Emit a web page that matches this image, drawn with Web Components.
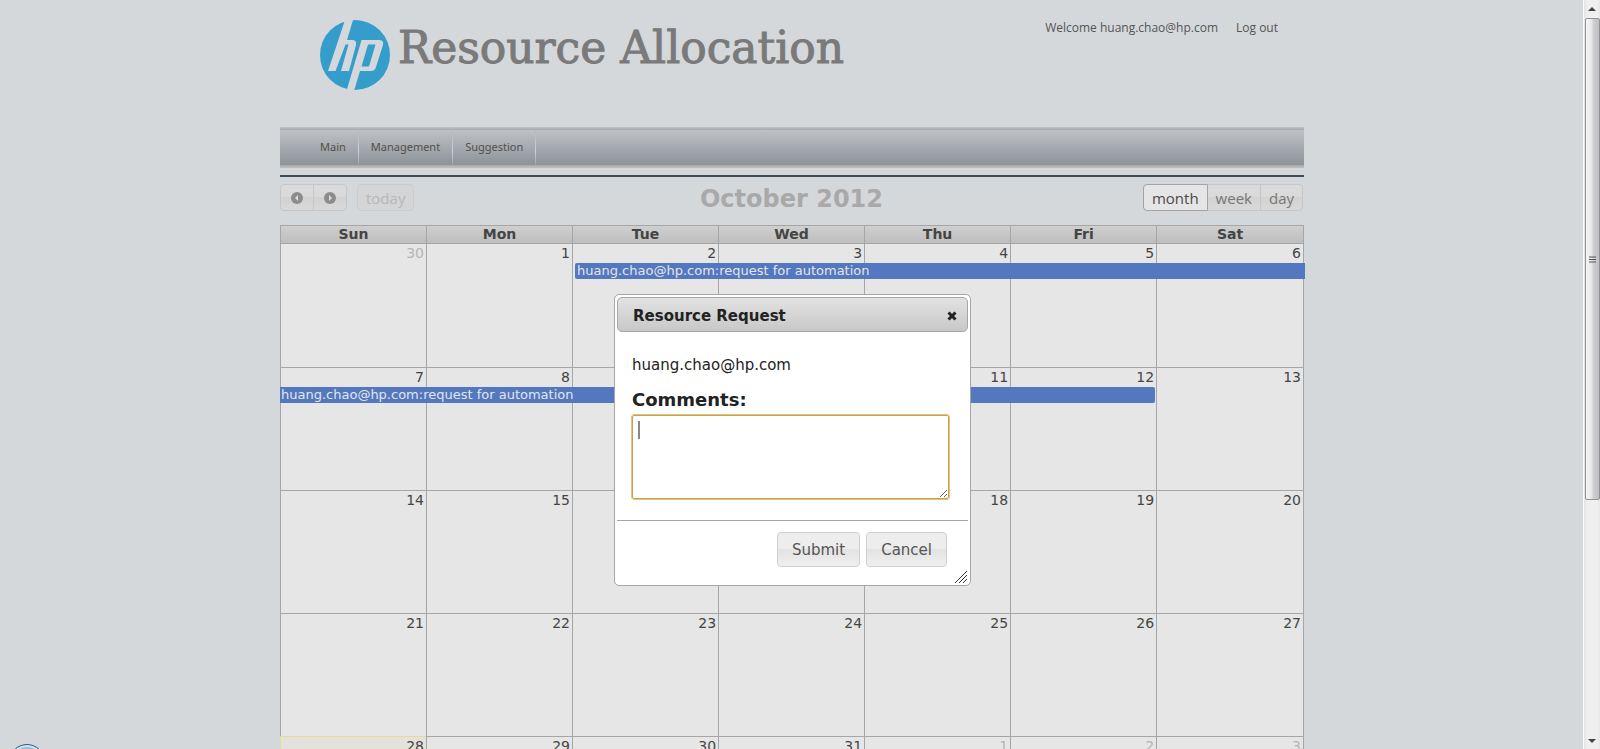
<!DOCTYPE html>
<html lang="en">
<head>
<meta charset="utf-8">
<title>Resource Allocation</title>
<style>
html, body { margin: 0; height: 100%; overflow: hidden; }
body { background: #d4d8db; color: #444; font-family: "DejaVu Sans", Verdana, sans-serif; }
</style>
</head>
<body>
<ra-app></ra-app>
<script>
const define = (name, html, setup) => customElements.define(name, class extends HTMLElement {
  connectedCallback() {
    if (this.shadowRoot) return;
    const t = document.createElement('template');
    t.innerHTML = html;
    this.attachShadow({ mode: 'open' }).append(t.content.cloneNode(true));
    if (setup) setup.call(this, this.shadowRoot);
  }
});

define('hp-logo', `
<style>:host{display:block;width:70px;height:70px} svg{display:block}</style>
<svg viewBox="0 0 70 70" width="70" height="70" role="img" aria-label="hp">
  <circle cx="35" cy="35" r="35" fill="#349dcc"/>
  <g fill="#d4d8db">
    <path d="M25 0H33L27 20H32Q37 20 36 25L29 51H21L28.500 24.500H25.500L15.500 51H8Z"/>
    <path fill-rule="evenodd" d="M41.500 20H59Q64 20 63 25L56 47Q55 51 51 51H40L34 71H26.500ZM48 24.500L41.500 46.500H49L55.500 24.500Z"/>
  </g>
</svg>`);

define('site-header', `
<style>
:host{display:block;height:127px;box-sizing:border-box;padding:20px 26px 0 40px}
header{display:flex;align-items:flex-start}
h1{margin:0 0 0 8px;font:44px/56px "DejaVu Serif",Rockwell,serif;color:#7a7a7a;-webkit-text-stroke:1px #7a7a7a;white-space:nowrap}
p{margin:0 18px 0 auto;font:12px/16px "Open Sans",sans-serif;color:#555}
a{font:12px/16px "Open Sans",sans-serif;color:#555;text-decoration:none}
</style>
<header><hp-logo></hp-logo><h1>Resource Allocation</h1><p>Welcome huang.chao@hp.com</p><a href="#">Log out</a></header>`);

define('site-nav', `
<style>
:host{display:block;border-bottom:2px solid #3f4a55;padding-bottom:7px}
nav{display:flex;box-sizing:border-box;height:41px;padding:3px 28px;
 background:linear-gradient(#bfc2c5,#a5a9ac) top/100% 3px no-repeat,linear-gradient(#a3a7aa,#bfc3c5) bottom/100% 3px no-repeat,linear-gradient(#c4c5c8,#878f95)}
a{padding:8px 12px 0 12px;height:27px;font:11px/18px "Noto Sans",sans-serif;color:#505050;text-decoration:none;border-right:1px solid;border-image:linear-gradient(#b4b7ba,#d0d2d4 60%,#9da2a6) 1}
</style>
<nav><a href="#">Main</a><a href="#">Management</a><a href="#">Suggestion</a></nav>`);

define('calendar-toolbar', `
<style>
:host{display:grid;grid-template-columns:1fr auto 1fr;align-items:start;padding:7px 1px 11px 0}
div{display:flex}
.end{justify-content:flex-end}
h2{margin:0;font-size:24px;line-height:30px;color:#a9a9a9}
button{box-sizing:border-box;height:27px;margin:0 -1px 0 0;padding:0 8px;border:1px solid #c6c6c6;background:linear-gradient(#dadada 50%,#d2d2d2 50%,#d9d9d9);font:15px/24px "Open Sans",sans-serif;color:#777}
.first{border-radius:4px 0 0 4px}
.last{border-radius:0 4px 4px 0;margin:0}
.icon{width:34px;padding:0 10px}
.icon svg{display:block}
.today{margin-left:10px;border-radius:4px;border-color:#ccc;color:#b6b8b9;background:#d3d5d7}
.on{background:#e5e5e5;border-color:#a3a3a3;color:#4a4a4a;position:relative}
</style>
<div>
 <button class="icon first" aria-label="Previous month"><svg width="12" height="12"><circle cx="6" cy="6" r="6" fill="#8c8c8c"/><path d="M7 3V9L4 6Z" fill="#ddd"/></svg></button>
 <button class="icon last" aria-label="Next month"><svg width="12" height="12"><circle cx="6" cy="6" r="6" fill="#8c8c8c"/><path d="M5 3V9L8 6Z" fill="#ddd"/></svg></button>
 <button class="today">today</button>
</div>
<h2>October 2012</h2>
<div class="end"><button class="on first">month</button><button>week</button><button class="last">day</button></div>`);

define('calendar-event', `
<style>
:host{position:absolute;z-index:1;top:19px;left:2px;box-sizing:border-box;width:calc(500% + 5px);height:16px;padding-left:2px;border-radius:2px 0 0 2px;background:#5378c0;color:#e5e5e5;font-size:13px;line-height:16px;text-align:left;white-space:nowrap}
:host([tail]){left:-1px;width:calc(600% + 5px);padding-left:1px;border-radius:0 2px 2px 0}
</style><slot></slot>`);

define('month-calendar', `
<style>
:host{display:block}
table{width:100%;table-layout:fixed;border-collapse:separate;border-spacing:0;font-size:14px}
th,td{box-sizing:border-box;padding:0;border:solid #a6a6a6;border-width:1px 0 0 1px}
th{width:14.26%}
th:last-child{width:auto}
th:last-child,td:last-child{border-right-width:1px}
th{height:18px;line-height:17px;background:linear-gradient(#cfcfcf,#bebebe);font-size:14px}
td{position:relative;height:123px;vertical-align:top;padding:0 2px 0 0;text-align:right;line-height:18px;background:#e6e6e6;font-size:14px}
tr:first-child td{height:124px}
.other{color:#b5b5b5}
.now{background:#e3e2dc;border-color:#e6dc9a}
</style>
<table><thead><tr></tr></thead><tbody></tbody></table>`, function (root) {
  root.querySelector('thead tr').innerHTML = ['Sun','Mon','Tue','Wed','Thu','Fri','Sat'].map(d => `<th scope="col">${d}</th>`).join('');
  const title = 'huang.chao@hp.com:request for automation';
  const events = { 2: `<calendar-event>${title}</calendar-event>`, 7: `<calendar-event tail>${title}</calendar-event>` };
  let rows = '';
  for (let w = 0; w < 5; w++) {
    rows += '<tr>';
    for (let d = 0; d < 7; d++) {
      const n = w * 7 + d, other = n < 1 || n > 31;
      rows += `<td class="${other ? 'other' : n === 28 ? 'now' : ''}">${n < 1 ? 30 : n > 31 ? n - 31 : n}${events[n] || ''}</td>`;
    }
    rows += '</tr>';
  }
  root.querySelector('tbody').innerHTML = rows;
});

define('request-dialog', `
<style>
:host{display:block;box-sizing:border-box;position:relative;width:357px;padding:2px;border:1px solid #a6a6a6;border-radius:5px;background:#fff;color:#222}
header{display:flex;align-items:center;justify-content:space-between;box-sizing:border-box;height:35px;padding:2px 10px 0 15px;border:1px solid #a6a6a6;border-radius:5px;background:linear-gradient(#e2e2e2,#c8c8c8)}
h2{margin:0;font-size:15px;line-height:20px}
.x{padding:0;border:0;background:none}
.x svg{display:block}
form{padding:23px 19px 21px 15px}
p{margin:0;font-size:15px;line-height:20px}
label{display:block;margin:13px 0 3px;font-size:18px;line-height:24px;font-weight:bold}
textarea{display:block;box-sizing:border-box;width:100%;height:84px;margin:0;border:1px solid #b5a55f;border-radius:2px;outline:1px solid #f0c16a;resize:both;background:linear-gradient(#888,#888) 5px 5px/2px 18px no-repeat #fff}
footer{display:flex;justify-content:flex-end;gap:6px;padding:11px 21px 16px;border-top:1px solid #a6a6a6}
footer button{box-sizing:border-box;height:35px;padding:0 14px;border:1px solid #d0d0d0;border-radius:4px;background:linear-gradient(#ededed 50%,#e3e3e3 50%,#efefef);color:#555;font:15px/30px "DejaVu Sans",sans-serif}
.grip{position:absolute;right:3px;bottom:2px}
</style>
<header><h2>Resource Request</h2><button class="x" aria-label="Close"><svg width="10" height="10"><path d="M1.500 1.500L8.500 8.500M8.500 1.500L1.500 8.500" stroke="#222" stroke-width="3"/></svg></button></header>
<form><p>huang.chao@hp.com</p><label for="c">Comments:</label><textarea id="c"></textarea></form>
<footer><button>Submit</button><button>Cancel</button></footer>
<svg class="grip" width="12" height="12"><path d="M0 12L12 0M4 12L12 4M8 12L12 8" stroke="#333"/></svg>`);

define('page-scrollbar', `
<style>
:host{display:flex;flex-direction:column;align-items:center;box-sizing:border-box;width:16px;background:linear-gradient(90deg,#e3e3e3,#efefef 3px,#f0f0f0 13px,#e6e6e6);box-shadow:-1px 0 #fbfcfc}
svg{display:block;margin:6px 0}
.thumb{display:flex;align-items:center;justify-content:center;box-sizing:border-box;width:15px;height:calc(64% + 3px);border:1px solid #929292;border-radius:2px;background:linear-gradient(90deg,#f7f7f7,#e6e6e8 45%,#cfcfd2 55%,#bfc0c3)}
.thumb svg{margin:0}
.down{margin-top:auto;margin-bottom:5px}
</style>
<svg width="8" height="6"><path d="M0 5L4 1L8 5Z" fill="#444"/></svg>
<div class="thumb"><svg width="7" height="7"><path d="M0 1H7M0 3.500H7M0 6H7" stroke="#555"/></svg></div>
<svg class="down" width="8" height="6"><path d="M0 1L4 5L8 1Z" fill="#444"/></svg>`);

define('ra-app', `
<style>
:host{display:flex;height:100vh;position:relative;overflow:hidden}
main{flex:1;min-width:0}
.page{max-width:1024px;margin:0 auto}
.overlay{position:absolute;z-index:2;inset:0 15px 0 0;display:flex;justify-content:center;align-items:flex-start;padding-top:294px}
.orb{position:absolute;left:9px;top:100%;margin-top:-5px;width:36px;height:36px;box-sizing:border-box;border:1px solid #2a5f93;border-radius:50%;background:#a3bacb;box-shadow:inset 0 0 0 2px #d5e2ea}
</style>
<main><div class="page"><site-header></site-header><site-nav></site-nav><calendar-toolbar></calendar-toolbar><month-calendar></month-calendar></div></main>
<page-scrollbar></page-scrollbar>
<div class="overlay"><request-dialog></request-dialog></div>
<div class="orb"></div>`);
</script>
</body>
</html>
